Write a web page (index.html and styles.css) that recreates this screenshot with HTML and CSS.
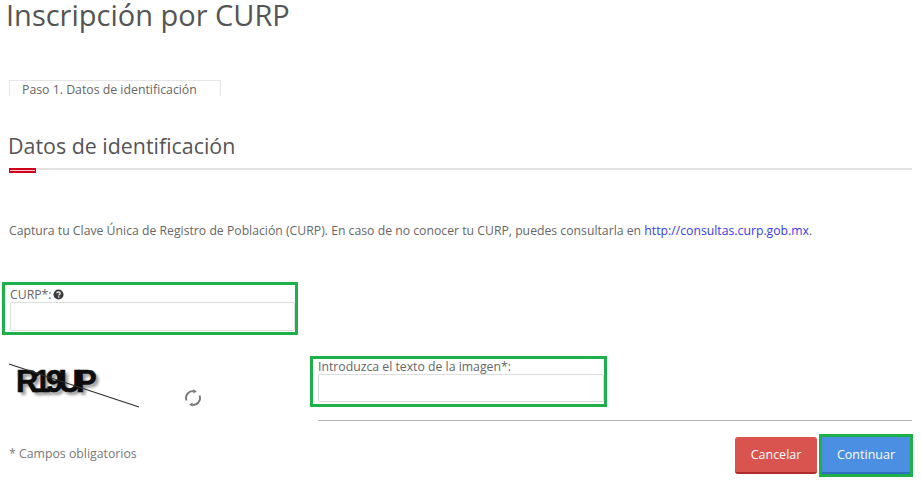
FILE: index.html
```html
<!DOCTYPE html>
<html lang="es">
<head>
    <meta charset="UTF-8">
    <title>Inscripción por CURP</title>
    <link rel="stylesheet" href="styles.css">
</head>
<body>
<h1 class="title">Inscripción por CURP</h1>
<div class="tab"><span>Paso 1. Datos de identificación</span></div>
<h2 class="section">Datos de identificación</h2>
<div class="section-rule"><em></em></div>
<p class="intro">Captura tu Clave Única de Registro de Población (CURP). En caso de no conocer tu CURP, puedes consultarla en <a href="#">http://consultas.curp.gob.mx</a>.</p>

<div class="mark mark-curp">
    <label class="field-label" for="curp">CURP*:<svg class="help" viewBox="0 0 12 12" width="11" height="11"><circle cx="6" cy="6" r="5.5" fill="#3d3d3d"/><path d="M4.2 4.7c0-1 .8-1.6 1.8-1.6s1.9.6 1.9 1.5c0 1.4-1.7 1.3-1.7 2.6" fill="none" stroke="#fff" stroke-width="1.3"/><rect x="5.5" y="8" width="1.4" height="1.4" fill="#fff"/></svg></label>
    <input class="field" id="curp" type="text">
</div>

<div class="captcha-row">
    <div class="captcha">
        <div class="captcha-img">
            <span class="captcha-text">R19UP</span>
            <svg class="captcha-line" viewBox="0 0 132 45" width="132" height="45"><line x1="1" y1="1" x2="131" y2="44" stroke="#2e2e2e" stroke-width="1.200"/></svg>
        </div>
        <svg class="reload" viewBox="0 0 18 18" width="18" height="18">
            <path d="M2.400 11.500A7 7 0 0 1 9.500 2.100" fill="none" stroke="#777" stroke-width="1.800"/>
            <path d="M15.600 6.500A7 7 0 0 1 8.500 15.900" fill="none" stroke="#777" stroke-width="1.800"/>
            <path d="M9.300 .3 12.800 2.600 9.300 4.600Z M8.700 17.700 5.200 15.400 8.700 13.400Z" fill="#777"/>
        </svg>
    </div>
    <div class="mark mark-text">
        <label class="field-label" for="texto">Introduzca el texto de la imagen*:</label>
        <input class="field" id="texto" type="text">
    </div>
</div>

<div class="form-rule"></div>

<div class="footer">
    <span class="required">* Campos obligatorios</span>
    <div class="buttons">
        <button class="btn btn-cancel" type="button">Cancelar</button>
        <div class="mark-btn"><button class="btn btn-next" type="button">Continuar</button></div>
    </div>
</div>
</body>
</html>
```

FILE: styles.css
```css
* {
    margin: 0;
    padding: 0;
    box-sizing: border-box;
    font-family: "Open Sans", "Liberation Sans", sans-serif;
    color: #5f5f5f;
}

html, body {
    height: 483px;
    overflow: hidden;
    background: #fff;
}

.title {
    margin-left: 6px;
    height: 42px;
    line-height: 29px;
    font-size: 29px;
    font-weight: 400;
    color: #555;
}

.tab {
    margin: 38px 0 0 9px;
    width: 212px;
    height: 16px;
    padding-left: 12px;
    border: 1px solid #e6e6e6;
    border-bottom: 0;
    overflow: hidden;
}

.tab span {
    display: block;
    font-size: 12.300px;
    line-height: 17px;
    color: #666;
}

.section {
    margin: 34px 0 0 8px;
    height: 31px;
    line-height: 31px;
    font-size: 21.400px;
    font-weight: 400;
    color: #555;
}

.section-rule {
    margin: 7px 9px 0 9px;
    height: 2px;
    background: #e2e2e2;
}

.section-rule em {
    display: block;
    width: 27px;
    height: 5px;
    border-top: 2px solid #d0021b;
    border-bottom: 2px solid #d0021b;
    border-left: 1px solid #d0021b;
    border-right: 1px solid #d0021b;
    background: #f4c9cf;
}

.intro {
    margin: 52px 0 0 9px;
    font-size: 12.240px;
    line-height: 18px;
    color: #666;
    white-space: nowrap;
}

.intro a {
    font-size: 12.240px;
    color: #3a3ae6;
    text-decoration: none;
}

.mark {
    border: 3px solid #1db04b;
    background: #fff;
}

.mark-curp {
    margin: 42px 0 0 2px;
    width: 296px;
    height: 53px;
    padding: 2px 0 0 5px;
}

.field-label {
    display: flex;
    align-items: center;
    gap: 1px;
    height: 15px;
    font-size: 12.250px;
    line-height: 15px;
    color: #666;
}

.help {
    margin-top: -1px;
}

.field {
    display: block;
    width: 285px;
    height: 29px;
    border: 1px solid #ddd;
    border-radius: 2px;
    background: #fff;
}

.captcha-row {
    display: flex;
    align-items: flex-start;
    margin: 21px 0 0 8px;
}

.captcha {
    display: flex;
    width: 302px;
    padding-top: 7px;
}

.captcha-img {
    position: relative;
    width: 132px;
    height: 45px;
}

.captcha-text {
    position: absolute;
    left: 8px;
    top: 1px;
    font-family: "Liberation Sans", sans-serif;
    font-size: 31px;
    line-height: 36px;
    font-weight: 700;
    letter-spacing: -4.800px;
    color: #0c0c0c;
    -webkit-text-stroke: .6px #0c0c0c;
    text-shadow: 3px 3px 3px #999;
}

.captcha-line {
    position: absolute;
    left: 0;
    top: 0;
}

.reload {
    margin: 26px 0 0 44px;
}

.mark-text {
    width: 297px;
    height: 51px;
    padding: 0 0 0 5px;
}

.mark-text .field {
    width: 286px;
    height: 28px;
}

.form-rule {
    margin: 12px 9px 0 318px;
    height: 1px;
    background: #b5b5b5;
}

.footer {
    display: flex;
    justify-content: space-between;
    align-items: center;
    margin: 13px 8px 0 9px;
}

.required {
    margin-bottom: 5px;
    font-size: 12.300px;
    color: #777;
}

.buttons {
    display: flex;
    align-items: center;
    gap: 2px;
}

.btn {
    height: 37px;
    border: 0;
    border-radius: 3px;
    font-size: 12.500px;
    color: #fff;
}

.btn-cancel {
    width: 82px;
    background: #d9534f;
    border-bottom: 2px solid #b02a2a;
}

.mark-btn {
    width: 94px;
    height: 43px;
    border: 3px solid #1db04b;
}

.btn-next {
    display: block;
    width: 88px;
    border-radius: 0;
    background: #4a8fe2;
    border-bottom: 2px solid #2f6fc0;
}
```
